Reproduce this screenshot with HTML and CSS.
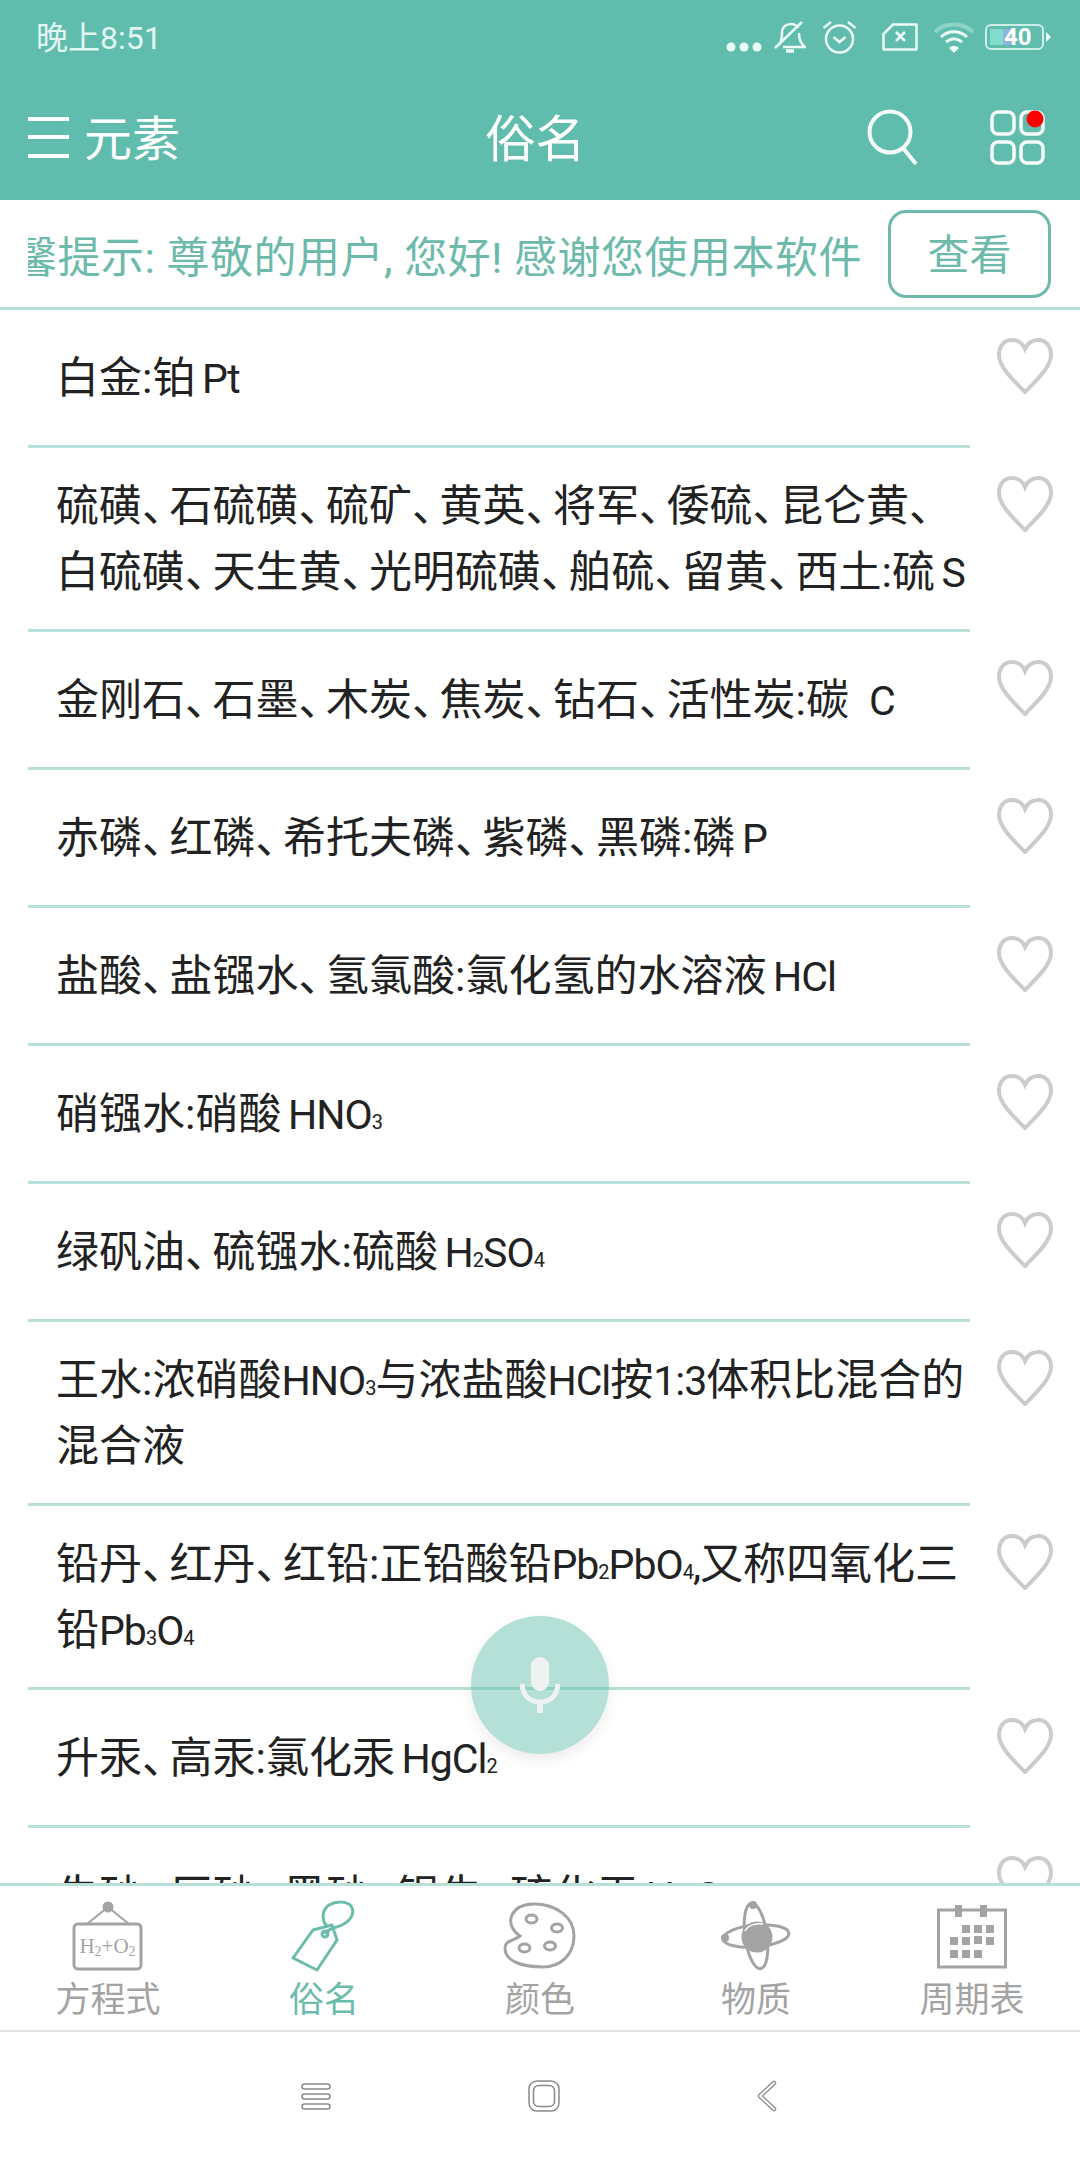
FILE: index.html
```html
<!DOCTYPE html>
<html lang="zh-CN">

<head>
    <meta charset="UTF-8">
    <meta name="viewport" content="width=device-width, initial-scale=1.0">
    <title>俗名</title>
    <link rel="stylesheet" href="styles.css">
</head>

<body>
    <svg class="defs" width="0" height="0">
        <symbol id="heart" viewBox="0 0 56 56">
            <path d="M28 11C25 4 20 2 15 2C7 2 2 8 2 17C2 29 17 43 28 54C39 43 54 29 54 17C54 8 49 2 41 2C36 2 31 4 28 11Z" fill="none" stroke="#ccc" stroke-width="4" />
        </symbol>
    </svg>

    <div class="phone">
        <div class="header">
            <div class="status">
                <span class="time">晚上8:51</span>
                <div class="status-icons">
                    <svg class="ic-dots" width="36" height="10" viewBox="0 0 36 10" fill="#eafaf6">
                        <circle cx="5" cy="5" r="4.5" /><circle cx="18" cy="5" r="4.5" /><circle cx="31" cy="5" r="4.5" />
                    </svg>
                    <svg class="ic-bell" width="32" height="33" viewBox="0 0 32 33" fill="none" stroke="#eafaf6" stroke-width="2.5">
                        <path d="M5 24C8 20 8 16 8 12C8 6 12 3 17 3C21 3 23 5 24 7M25 12C25 17 26 22 31 26H9" />
                        <path d="M1 27L28 1" />
                        <path d="M12 30H20" stroke-width="3.5" />
                    </svg>
                    <svg class="ic-alarm" width="35" height="34" viewBox="0 0 35 34" fill="none" stroke="#eafaf6" stroke-width="2.5">
                        <circle cx="17.5" cy="19" r="13.5" />
                        <path d="M11.5 17L17.5 22L23.5 17" />
                        <path d="M1.5 8L9 2M33.5 8L26 2" />
                    </svg>
                    <svg class="ic-sim" width="36" height="28" viewBox="0 0 36 28" fill="none" stroke="#eafaf6" stroke-width="2.5">
                        <path d="M11 1.5H34.5V26.5H1.5V11Z" stroke-linejoin="round" />
                        <path d="M14 9L23 18M23 9L14 18" />
                    </svg>
                    <svg class="ic-wifi" width="42" height="31" viewBox="0 0 42 31" fill="none" stroke="#eafaf6" stroke-width="3">
                        <path d="M2 10C12 0 30 0 40 10" stroke="#8fd3c6" stroke-width="4" />
                        <path d="M8 15C15 8 27 8 34 15" />
                        <path d="M13 20C18 16 24 16 29 20" />
                        <path d="M16 26L21 31L26 26C23 23 19 23 16 26Z" fill="#eafaf6" stroke="none" />
                    </svg>
                    <svg class="ic-batt" width="67" height="26" viewBox="0 0 67 26">
                        <rect x="1" y="1" width="57" height="24" rx="5" fill="none" stroke="#cdeee8" stroke-width="2" />
                        <rect x="5" y="5" width="13" height="16" fill="#82dccb" />
                        <rect x="18" y="5" width="9" height="16" fill="#8fb4dc" />
                        <text x="19" y="21" class="batt-num">40</text>
                        <path d="M61 8L66 13L61 18Z" fill="#eafaf6" />
                    </svg>
                </div>
            </div>
            <div class="appbar">
                <div class="appbar-left">
                    <svg width="41" height="43" viewBox="0 0 41 43" fill="#fff">
                        <rect y="1" width="41" height="4" /><rect y="19" width="41" height="4" /><rect y="38" width="41" height="4" />
                    </svg>
                    <span class="back-text">元素</span>
                </div>
                <div class="title">俗名</div>
                <div class="appbar-right">
                    <svg width="52" height="56" viewBox="0 0 52 56" fill="none" stroke="#f4fbfa" stroke-width="4">
                        <circle cx="23" cy="23" r="20.5" />
                        <path d="M36 39L49 55" />
                    </svg>
                    <svg width="55" height="56" viewBox="0 0 55 56" fill="none" stroke="#f4fbfa" stroke-width="3.5">
                        <rect x="2" y="3" width="22" height="22" rx="6" />
                        <rect x="31" y="3" width="22" height="22" rx="6" />
                        <rect x="2" y="33" width="22" height="21" rx="6" />
                        <rect x="31" y="33" width="22" height="21" rx="6" />
                        <circle cx="45" cy="10" r="8.5" fill="#f00" stroke="none" />
                    </svg>
                </div>
            </div>
        </div>

        <div class="notice">
            <div class="notice-text"><span>温馨提示: 尊敬的用户, 您好! 感谢您使用本软件</span></div>
            <a href="#" class="notice-btn">查看</a>
        </div>

        <div class="list">
            <div class="row">
                <p class="row-text">白金:铂 <span class="en">Pt</span></p>
                <svg class="heart"><use href="#heart" /></svg>
            </div>
            <div class="row">
                <p class="row-text">硫磺<i>、</i>石硫磺<i>、</i>硫矿<i>、</i>黄英<i>、</i>将军<i>、</i>倭硫<i>、</i>昆仑黄<i>、</i><br>白硫磺<i>、</i>天生黄<i>、</i>光明硫磺<i>、</i>舶硫<i>、</i>留黄<i>、</i>西土:硫 <span class="en">S</span></p>
                <svg class="heart"><use href="#heart" /></svg>
            </div>
            <div class="row">
                <p class="row-text">金刚石<i>、</i>石墨<i>、</i>木炭<i>、</i>焦炭<i>、</i>钻石<i>、</i>活性炭:碳&nbsp;&nbsp; <span class="en">C</span></p>
                <svg class="heart"><use href="#heart" /></svg>
            </div>
            <div class="row">
                <p class="row-text">赤磷<i>、</i>红磷<i>、</i>希托夫磷<i>、</i>紫磷<i>、</i>黑磷:磷 <span class="en">P</span></p>
                <svg class="heart"><use href="#heart" /></svg>
            </div>
            <div class="row">
                <p class="row-text">盐酸<i>、</i>盐镪水<i>、</i>氢氯酸:氯化氢的水溶液 <span class="en">HCl</span></p>
                <svg class="heart"><use href="#heart" /></svg>
            </div>
            <div class="row">
                <p class="row-text">硝镪水:硝酸 <span class="en">HNO<sub>3</sub></span></p>
                <svg class="heart"><use href="#heart" /></svg>
            </div>
            <div class="row">
                <p class="row-text">绿矾油<i>、</i>硫镪水:硫酸 <span class="en">H<sub>2</sub>SO<sub>4</sub></span></p>
                <svg class="heart"><use href="#heart" /></svg>
            </div>
            <div class="row">
                <p class="row-text">王水:浓硝酸<span class="en">HNO<sub>3</sub></span>与浓盐酸<span class="en">HCl</span>按<span class="en">1:3</span>体积比混合的<br>混合液</p>
                <svg class="heart"><use href="#heart" /></svg>
            </div>
            <div class="row">
                <p class="row-text">铅丹<i>、</i>红丹<i>、</i>红铅:正铅酸铅<span class="en">Pb<sub>2</sub>PbO<sub>4</sub>,</span>又称四氧化三<br>铅<span class="en">Pb<sub>3</sub>O<sub>4</sub></span></p>
                <svg class="heart"><use href="#heart" /></svg>
            </div>
            <div class="row">
                <p class="row-text">升汞<i>、</i>高汞:氯化汞 <span class="en">HgCl<sub>2</sub></span></p>
                <svg class="heart"><use href="#heart" /></svg>
            </div>
            <div class="row">
                <p class="row-text">朱砂<i>、</i>辰砂<i>、</i>黑砂<i>、</i>银朱<i>、</i>硫化汞 <span class="en">HgS</span></p>
                <svg class="heart"><use href="#heart" /></svg>
            </div>
        </div>

        <div class="fab">
            <svg width="60" height="58" viewBox="0 0 60 58" fill="none" stroke="#eef3f1" stroke-width="5">
                <rect x="21" y="1" width="18" height="34" rx="9" fill="#eef3f1" stroke="none" />
                <path d="M12 28C13 40 20 46 30 46C40 46 47 40 48 28" />
                <path d="M30 46V57" stroke-width="6" />
            </svg>
        </div>

        <div class="tabs">
            <div class="tab">
                <svg width="80" height="72" viewBox="0 0 80 72" fill="none" stroke="#a3a3a3" stroke-width="2">
                    <circle cx="40" cy="7" r="5.5" fill="#a3a3a3" stroke="none" />
                    <path d="M19 24L40 7L61 24" />
                    <rect x="6" y="24" width="67" height="45" rx="4" stroke-width="3" />
                    <text x="39.5" y="53" class="sign-text">H<tspan class="sign-sub" dy="3">2</tspan><tspan dy="-3">+O</tspan><tspan class="sign-sub" dy="3">2</tspan></text>
                </svg>
                <span>方程式</span>
            </div>
            <div class="tab active">
                <svg width="80" height="72" viewBox="0 0 80 72" fill="none" stroke="#6bbcaa" stroke-width="3" stroke-linejoin="round">
                    <path d="M9 58L29 30L48 25L53 40L33 70Z" />
                    <circle cx="41" cy="34" r="3" />
                    <path d="M43 26C37 20 38 10 45 5C52 1 63 1 67 6C71 12 68 20 58 25C52 28 44 28 41 34" />
                </svg>
                <span>俗名</span>
            </div>
            <div class="tab">
                <svg width="80" height="72" viewBox="0 0 80 72" fill="none" stroke="#a3a3a3" stroke-width="3">
                    <path d="M20 36C14 32 8 24 12 15C16 7 25 4 34 4C56 4 74 17 74 36C74 55 60 67 43 67C24 67 5 62 5 48C5 40 14 41 20 36Z" />
                    <ellipse cx="31.5" cy="19" rx="5.5" ry="4" />
                    <ellipse cx="57" cy="28" rx="5.5" ry="4" />
                    <ellipse cx="24.5" cy="48" rx="5.5" ry="4" />
                    <ellipse cx="50" cy="46" rx="5.5" ry="4" />
                </svg>
                <span>颜色</span>
            </div>
            <div class="tab">
                <svg width="80" height="72" viewBox="0 0 80 72" fill="none" stroke="#a3a3a3" stroke-width="3">
                    <ellipse cx="40" cy="36" rx="33" ry="11" transform="rotate(-5 40 36)" />
                    <ellipse cx="40" cy="36" rx="11" ry="33" transform="rotate(-8 40 36)" />
                    <circle cx="41" cy="37" r="15.5" fill="#a3a3a3" stroke="none" />
                    <path d="M29 31C32 25 40 23 47 24" stroke="#fff" stroke-width="1.5" />
                    <circle cx="37" cy="5" r="4" fill="#a3a3a3" stroke="none" />
                    <circle cx="9" cy="38" r="4" fill="#a3a3a3" stroke="none" />
                </svg>
                <span>物质</span>
            </div>
            <div class="tab">
                <svg width="80" height="72" viewBox="0 0 80 72" fill="#a3a3a3">
                    <rect x="6.5" y="10" width="67" height="57" fill="none" stroke="#a3a3a3" stroke-width="3" />
                    <rect x="23" y="5" width="7" height="12" /><rect x="48" y="5" width="7" height="12" />
                    <rect x="30" y="25" width="8" height="8" /><rect x="42" y="25" width="8" height="8" /><rect x="54" y="25" width="8" height="8" />
                    <rect x="18" y="37" width="8" height="8" /><rect x="30" y="37" width="8" height="8" /><rect x="42" y="36" width="8" height="8" /><rect x="54" y="37" width="8" height="8" />
                    <rect x="18" y="50" width="8" height="8" /><rect x="30" y="50" width="8" height="8" /><rect x="42" y="50" width="8" height="8" />
                </svg>
                <span>周期表</span>
            </div>
        </div>

        <div class="sysnav">
            <svg width="30" height="27" viewBox="0 0 30 27" fill="none" stroke="#8a8a8a" stroke-width="1.5">
                <rect x="1" y="1" width="28" height="5" rx="2.5" /><rect x="1" y="11" width="28" height="5" rx="2.5" /><rect x="1" y="21" width="28" height="5" rx="2.5" />
            </svg>
            <svg width="32" height="32" viewBox="0 0 32 32" fill="none" stroke="#8a8a8a" stroke-width="1.5">
                <rect x="1" y="1" width="30" height="30" rx="8" /><rect x="5.5" y="5.5" width="21" height="21" rx="5" />
            </svg>
            <svg width="20" height="32" viewBox="0 0 20 32" fill="none" stroke-linecap="round" stroke-linejoin="round">
                <path d="M17 3L3 16L17 29" stroke="#8a8a8a" stroke-width="4.5" />
                <path d="M17 3L3 16L17 29" stroke="#fff" stroke-width="2" />
            </svg>
        </div>
    </div>
</body>

</html>
```

FILE: styles.css
```css
* {
    box-sizing: border-box;
}

body {
    margin: 0;
    background-color: #fff;
    font-family: Roboto, "Noto Sans CJK SC", sans-serif;
}

p {
    margin: 0;
}

.defs {
    position: absolute;
}

.phone {
    position: relative;
    display: flex;
    flex-direction: column;
    width: 1080px;
    height: 2160px;
    overflow: hidden;
    background-color: #fff;
}

/* 顶部 */

.header {
    height: 200px;
    background-color: #60bdad;
}

.status {
    display: flex;
    align-items: center;
    justify-content: space-between;
    height: 74px;
    padding: 0 28px 0 36px;
    color: #e2f6f2;
}

.time {
    margin-top: -4px;
    font-size: 32px;
}

.status-icons {
    display: flex;
    align-items: center;
}

.ic-dots {
    margin-top: 20px;
}

.ic-bell {
    margin-left: 12px;
}

.ic-alarm {
    margin-left: 16px;
}

.ic-sim {
    margin-left: 25px;
}

.ic-wifi {
    margin-left: 15px;
}

.ic-batt {
    margin-left: 10px;
}

.batt-num {
    font-size: 24px;
    font-weight: 700;
    fill: #fff;
}

.appbar {
    display: grid;
    grid-template-columns: 1fr auto 1fr;
    align-items: center;
    height: 126px;
    padding: 0 35px 0 28px;
    color: #fff;
}

.appbar-left {
    display: flex;
    align-items: center;
    gap: 15px;
}

.back-text {
    margin-top: -5px;
    font-size: 48px;
}

.title {
    margin: -5px 0 0 -2px;
    font-size: 50px;
}

.appbar-right {
    display: flex;
    align-items: center;
    justify-content: flex-end;
    gap: 71px;
}

/* 提示条 */

.notice {
    display: flex;
    align-items: center;
    height: 110px;
    padding: 0 29px 0 28px;
    border-bottom: 3px solid #b9e0d8;
    color: #6dbaab;
}

.notice-text {
    display: flex;
    justify-content: flex-end;
    flex: 1;
    min-width: 0;
    overflow: hidden;
    margin-right: 26px;
    font-size: 43px;
    letter-spacing: .5px;
    white-space: nowrap;
}

.notice-btn {
    width: 163px;
    height: 88px;
    line-height: 85px;
    border: 3px solid #6dbaab;
    border-radius: 18px;
    color: #6dbaab;
    font-size: 42px;
    text-align: center;
    text-decoration: none;
}

/* 列表 */

.list {
    flex: 1;
    min-height: 0;
    overflow: hidden;
}

.row {
    display: flex;
    align-items: flex-start;
    flex-shrink: 0;
}

.row-text {
    width: 942px;
    height: 138px;
    margin-left: 28px;
    padding: 35px 0 34px 28px;
    border-bottom: 3px solid #b9e0d8;
    color: #222;
    font-size: 43px;
    line-height: 66px;
    word-spacing: -4px;
    white-space: nowrap;
}

.row-text:has(br) {
    height: 184px;
    padding: 25px 0 24px 28px;
}

/* 顿号在原图里比全角窄 */
.row-text i {
    margin-right: 6px;
    font-style: normal;
    font-feature-settings: "halt";
}

.row-text .en {
    font-size: 41px;
    line-height: 1;
    letter-spacing: -1px;
}

.row-text sub {
    font-size: 20px;
    line-height: 0;
    vertical-align: baseline;
}

.heart {
    flex-shrink: 0;
    width: 56px;
    height: 56px;
    margin: 28px 0 0 27px;
}

.fab {
    position: absolute;
    left: 471px;
    top: 1616px;
    display: flex;
    align-items: center;
    justify-content: center;
    width: 138px;
    height: 138px;
    border-radius: 50%;
    background-color: rgba(96, 189, 173, .47);
    box-shadow: 0 6px 14px rgba(0, 0, 0, .08);
}

/* 底部导航 */

.tabs {
    display: grid;
    grid-template-columns: repeat(5, 1fr);
    height: 149px;
    padding-top: 14px;
    border-top: 3px solid #b9e0d8;
    border-bottom: 2px solid #e5e5e5;
}

.tab {
    display: flex;
    flex-direction: column;
    align-items: center;
    color: #a3a3a3;
    font-size: 35px;
    line-height: 44px;
}

.tab svg {
    margin-bottom: 7px;
}

.tab.active {
    color: #6bbcaa;
}

.sign-text {
    font-family: "Liberation Serif", serif;
    font-size: 21px;
    fill: #a3a3a3;
    stroke: none;
    text-anchor: middle;
}

.sign-sub {
    font-size: 14px;
}

.sysnav {
    display: flex;
    align-items: center;
    justify-content: space-between;
    flex: none;
    height: 128px;
    padding: 0 303px 0 301px;
}
```
